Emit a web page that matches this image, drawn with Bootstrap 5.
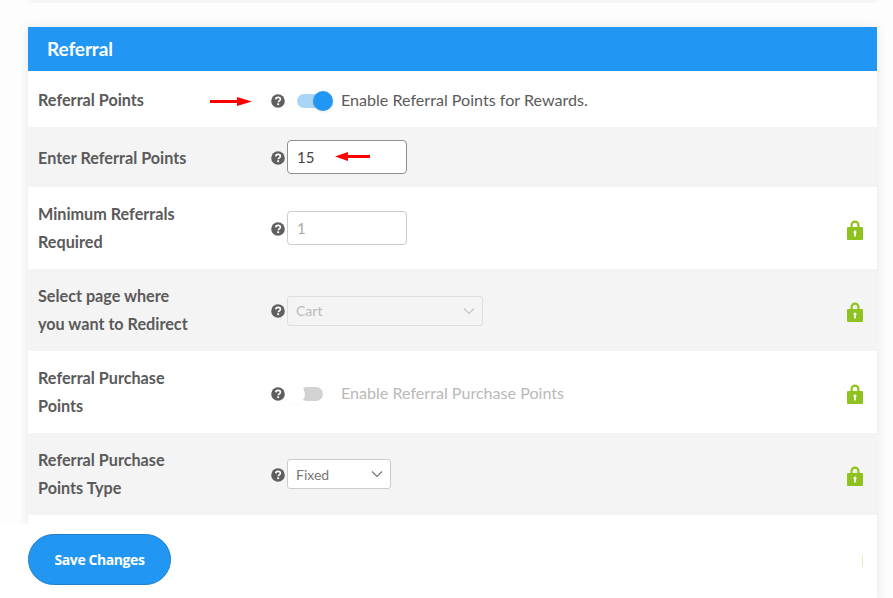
<!DOCTYPE html>
<html lang="en">
<head>
<meta charset="utf-8">
<title>Referral</title>
<link href="https://cdn.jsdelivr.net/npm/bootstrap@5.3.0/dist/css/bootstrap.min.css" rel="stylesheet">
<style>
html,body{height:598px;overflow:hidden}
body{background:#fdfdfd;font-family:Lato,"Liberation Sans",sans-serif;font-size:15px;color:#555}
.topstrip{height:3px;margin:0 16px 0 28px;background:#f7f7f7}
.panel{margin:24px 16px 0 28px;width:849px;background:#fff;box-shadow:0 0 10px rgba(0,0,0,.09)}
.panel-head{height:44px;background:#2196f3;color:#fff;font-size:19px;font-weight:700;padding-left:19px;letter-spacing:-.1px}
.setrow{position:relative;padding-left:10px;padding-right:14px;background:#fff}
.setrow.alt{background:#f4f4f4}
.h56{height:56px}.h60{height:60px}.h82{height:82px}.h90{height:90px}
.lbl{width:233px;font-weight:700;font-size:16.2px;line-height:28px;color:#5a5a5a;flex:none}
.qmark{width:16px;flex:none;display:block;margin-top:2px}
.qmark svg{display:block;width:14px;height:14px}
.lowrow .qmark,.lowrow .tog{margin-top:4px}
.lowrow .tog-text{margin-top:2px}
.lblshift .lbl{margin-top:2px}
.ctl-input{width:120px;height:34px;padding:0 9px;font-size:15px;color:#444;border-color:#8f8f8f;border-radius:4px;background:#fff;font-family:inherit}
.ctl-input:disabled{background:#fff;color:#aaa;border-color:#ccc;opacity:1}
.ctl-select{height:30px;padding:0 24px 0 8px;font-size:14px;color:#777;border-color:#ccc;border-radius:3px;background-color:#fff;background-position:right 7px center;background-size:12px 8px;font-family:inherit;background-image:url("data:image/svg+xml,%3csvg xmlns='http://www.w3.org/2000/svg' viewBox='0 0 12 8'%3e%3cpath fill='none' stroke='%23777' stroke-width='1.200' d='M1 1.500l5 5 5-5'/%3e%3c/svg%3e")}
.ctl-select:disabled{background-color:#f4f4f4;color:#bbb;border-color:#ddd;opacity:1;margin-top:2px;padding-bottom:2px;background-image:url("data:image/svg+xml,%3csvg xmlns='http://www.w3.org/2000/svg' viewBox='0 0 12 8'%3e%3cpath fill='none' stroke='%23c4c4c4' stroke-width='1.200' d='M1 1.500l5 5 5-5'/%3e%3c/svg%3e")}
.w196{width:196px}.w104{width:104px}
.tog{position:relative;display:block;width:36px;height:20px;margin-left:10px;flex:none}
.tog i{position:absolute;display:block}
.tog .trk{left:0;top:3px;width:26px;height:14px;border-radius:7px;background:#a9d5f7}
.tog .knb{left:16px;top:0;width:20px;height:20px;border-radius:50%;background:#2196f3;box-shadow:0 1px 3px rgba(0,0,0,.12)}
.tog.off .trk{left:3px;width:23px;background:#d2d2d2}
.tog.off .knb{left:-12px;background:#fff;box-shadow:0 1px 4px rgba(0,0,0,.03)}
.tog-text{margin-left:8px;font-size:16.1px;color:#5a5a5a;white-space:nowrap}
.tog-text.dim{color:#b9b9b9}
.lockic{margin-left:auto;margin-top:4px;display:block;flex:none}
.redarrow{position:absolute;display:block}
.savebar{position:fixed;left:0;bottom:0;width:877px;height:74px;background:#fff;padding:10px 14px 0 28px}
.savebtn{width:143px;height:51px;border-radius:26px;background:#2196f3;border:1px solid #1e7fcb;color:#fff;font-family:"Open Sans",Lato,sans-serif;font-weight:700;font-size:14px;letter-spacing:-.42px;padding:0}
.savebtn:hover{background:#2196f3;color:#fff;border-color:#1e7fcb}
.tick{display:block;width:1px;height:11px;background:#e4efb4;margin-top:22px}
</style>
</head>
<body>
<svg width="0" height="0" class="d-block">
<defs>
<symbol id="q" viewBox="0 0 14 14">
<circle cx="7" cy="7" r="6.800" fill="#5f5f5f"/>
<path d="M4.700 5.400C4.800 4.100 5.800 3.400 7.100 3.400C8.400 3.400 9.400 4.200 9.400 5.300C9.400 6.800 7.300 6.900 7.200 8.300" fill="none" stroke="#fff" stroke-width="1.600"/>
<rect x="6.200" y="9.300" width="1.900" height="1.800" fill="#fff"/>
</symbol>
<symbol id="lk" viewBox="0 0 16 20">
<path d="M3.500 8V5a4.500 4.500 0 0 1 9 0v3h-2.200V5a2.300 2.300 0 0 0-4.600 0v3z" fill="#8dc21f"/>
<path d="M1 7h14a1 1 0 0 1 1 1v11a1 1 0 0 1-1 1H1a1 1 0 0 1-1-1V8a1 1 0 0 1 1-1zM8 10.500a1.600 1.600 0 0 0-.9 2.900V16.500h1.800V13.400A1.600 1.600 0 0 0 8 10.500z" fill="#8dc21f" fill-rule="evenodd"/>
</symbol>
</defs>
</svg>

<div class="topstrip"></div>
<div class="panel">
  <div class="panel-head d-flex align-items-center">Referral</div>

  <div class="setrow lowrow lblshift h56 d-flex align-items-center">
    <div class="lbl">Referral Points</div>
    <span class="qmark"><svg><use href="#q"/></svg></span>
    <span class="tog"><i class="trk"></i><i class="knb"></i></span>
    <span class="tog-text">Enable Referral Points for Rewards.</span>
    <svg class="redarrow" style="left:182px;top:26px" width="42" height="9" viewBox="0 0 42 9"><path d="M0 3H27V0L42 4.500L27 9V6H0z" fill="#f00"/></svg>
  </div>

  <div class="setrow alt lblshift h60 d-flex align-items-center">
    <div class="lbl">Enter Referral Points</div>
    <span class="qmark"><svg><use href="#q"/></svg></span>
    <input class="form-control ctl-input" type="text" value="15" aria-label="Enter Referral Points">
    <svg class="redarrow" style="left:307px;top:25px" width="35" height="9" viewBox="0 0 35 9"><path d="M35 3H13V0L0 4.500L13 9V6H35z" fill="#f00"/></svg>
  </div>

  <div class="setrow h82 d-flex align-items-center">
    <div class="lbl">Minimum Referrals<br>Required</div>
    <span class="qmark"><svg><use href="#q"/></svg></span>
    <input class="form-control ctl-input" type="text" value="1" disabled aria-label="Minimum Referrals Required">
    <svg class="lockic" width="16" height="20"><use href="#lk"/></svg>
  </div>

  <div class="setrow alt h82 d-flex align-items-center">
    <div class="lbl">Select page where<br>you want to Redirect</div>
    <span class="qmark"><svg><use href="#q"/></svg></span>
    <select class="form-select ctl-select w196" disabled aria-label="Redirect page"><option>Cart</option></select>
    <svg class="lockic" width="16" height="20"><use href="#lk"/></svg>
  </div>

  <div class="setrow lowrow h82 d-flex align-items-center">
    <div class="lbl">Referral Purchase<br>Points</div>
    <span class="qmark"><svg><use href="#q"/></svg></span>
    <span class="tog off"><i class="trk"></i><i class="knb"></i></span>
    <span class="tog-text dim">Enable Referral Purchase Points</span>
    <svg class="lockic" width="16" height="20"><use href="#lk"/></svg>
  </div>

  <div class="setrow alt h82 d-flex align-items-center">
    <div class="lbl">Referral Purchase<br>Points Type</div>
    <span class="qmark"><svg><use href="#q"/></svg></span>
    <select class="form-select ctl-select w104" aria-label="Points type"><option>Fixed</option></select>
    <svg class="lockic" width="16" height="20"><use href="#lk"/></svg>
  </div>

  <div class="setrow h90"></div>
</div>

<div class="savebar d-flex justify-content-between">
  <button type="button" class="btn savebtn">Save Changes</button>
  <span class="tick"></span>
</div>
<script src="https://cdn.jsdelivr.net/npm/bootstrap@5.3.0/dist/js/bootstrap.bundle.min.js"></script>
</body>
</html>
